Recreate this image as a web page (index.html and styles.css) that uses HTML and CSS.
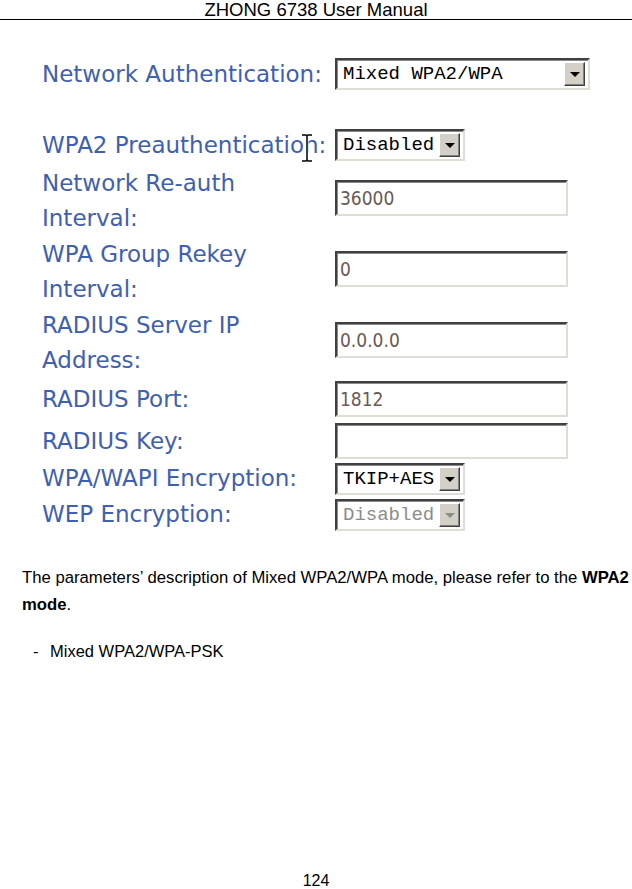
FILE: index.html
```html
<!DOCTYPE html>
<html lang="en">
<head>
    <meta charset="UTF-8" />
    <title>ZHONG 6738 User Manual</title>
    <link rel="stylesheet" href="styles.css">
</head>
<body>

<!-- Page header -->
<div class="page-header">ZHONG 6738 User Manual</div>

<!-- Screenshot of the router form -->
<div class="shot">
    <div class="row row-1">
        <div class="label">Network Authentication:</div>
        <div class="select wide"><span class="value">Mixed WPA2/WPA</span><span class="arrow"></span></div>
    </div>

    <div class="row row-2">
        <div class="label">WPA2 Preauthentication:</div>
        <div class="select"><span class="value">Disabled</span><span class="arrow"></span></div>
        <svg class="cursor" width="14" height="28" viewBox="0 0 14 28">
            <path d="M2 1h4l1 1 1-1h4M7 2v24M2 27h4l1-1 1 1h4" fill="none" stroke="#fff" stroke-width="3"/>
            <path d="M2 1h4l1 1 1-1h4M7 2v24M2 27h4l1-1 1 1h4" fill="none" stroke="#000" stroke-width="1.5"/>
        </svg>
    </div>

    <div class="row row-tall row-3">
        <div class="label">Network Re-auth<br>Interval:</div>
        <div class="input">36000</div>
    </div>

    <div class="row row-tall">
        <div class="label">WPA Group Rekey<br>Interval:</div>
        <div class="input">0</div>
    </div>

    <div class="row row-tall">
        <div class="label">RADIUS Server IP<br>Address:</div>
        <div class="input">0.0.0.0</div>
    </div>

    <div class="row row-6">
        <div class="label">RADIUS Port:</div>
        <div class="input">1812</div>
    </div>

    <div class="row row-7">
        <div class="label">RADIUS Key:</div>
        <div class="input"></div>
    </div>

    <div class="row row-8">
        <div class="label">WPA/WAPI Encryption:</div>
        <div class="select"><span class="value">TKIP+AES</span><span class="arrow"></span></div>
    </div>

    <div class="row row-9">
        <div class="label">WEP Encryption:</div>
        <div class="select disabled"><span class="value">Disabled</span><span class="arrow"></span></div>
    </div>
</div>

<!-- Body text -->
<p class="text">The parameters’ description of Mixed WPA2/WPA mode, please refer to the <strong>WPA2</strong><br><strong>mode</strong>.</p>

<p class="item"><span class="dash">-</span>Mixed WPA2/WPA-PSK</p>

<!-- Page number -->
<div class="page-number">124</div>

</body>
</html>
```

FILE: styles.css
```css
/* Page */
* {
    box-sizing: border-box;
    margin: 0;
    padding: 0;
}

body {
    width: 632px;
    height: 889px;
    position: relative;
    background: #fff;
    font-family: 'Liberation Sans', Arial, sans-serif;
    color: #000;
}

.page-header {
    height: 20px;
    border-bottom: 1px solid #000;
    text-align: center;
    font-size: 18.5px;
    line-height: 19px;
}

/* Form screenshot */
.shot {
    padding: 36px 0 0 42px;
}

.row {
    display: flex;
    align-items: center;
    position: relative;
    height: 36px;
}
.row-2 {
    margin-top: 35px;
}
.row-3 {
    margin-top: 2px;
}
.row-tall {
    height: 71px;
}
.row-tall .input {
    margin-top: -6px;
}
.row-6 {
    margin-top: 3px;
}
.row-7 {
    margin-top: 6px;
}
.row-8 {
    margin-top: 3px;
    height: 33px;
}
.row-9 {
    margin-top: 3px;
    height: 33px;
}

.label {
    width: 293px;
    font-family: 'DejaVu Sans', sans-serif;
    font-size: 23px;
    line-height: 35px;
    color: #4060b0;
    white-space: nowrap;
}

.input {
    width: 233px;
    height: 36px;
    border: 2px solid;
    border-color: #404040 #e0ddd6 #e0ddd6 #404040;
    box-shadow: inset 1px 1px 0 #8a8a8a;
    padding-left: 3px;
    font-family: 'DejaVu Sans Condensed', 'DejaVu Sans', sans-serif;
    font-size: 19px;
    line-height: 32px;
    color: #6a5a55;
}

.select {
    display: flex;
    align-items: center;
    width: 130px;
    height: 32px;
    border: 2px solid;
    border-color: #404040 #e0ddd6 #e0ddd6 #404040;
    box-shadow: inset 1px 1px 0 #8a8a8a;
    padding: 0 3px 0 6px;
    background: #fff;
}
.select.wide {
    width: 255px;
}
.select .value {
    flex: 1;
    font-family: 'Liberation Mono', 'Courier New', monospace;
    font-size: 19px;
    color: #000;
    white-space: nowrap;
    overflow: hidden;
}
.select.disabled .value {
    color: #8c8c8c;
}

/* Drop-down button */
.arrow {
    position: relative;
    width: 21px;
    height: 24px;
    background: #d4d0c8;
    border: 1px solid;
    border-color: #fff #404040 #404040 #fff;
    box-shadow: inset -1px -1px 0 #808080;
}
.arrow::after {
    content: "";
    position: absolute;
    left: 5px;
    top: 9px;
    border-left: 5px solid transparent;
    border-right: 5px solid transparent;
    border-top: 5px solid #000;
}
.select.disabled .arrow::after {
    border-top-color: #8c8c8c;
}

/* Mouse cursor over the label */
.cursor {
    position: absolute;
    left: 258px;
    top: 7px;
}

/* Document text */
.text {
    margin: 33px 0 0 22px;
    font-size: 16.7px;
    line-height: 27px;
    white-space: nowrap;
}

.item {
    margin: 23px 0 0 33px;
    font-size: 16.5px;
    line-height: 20px;
}
.dash {
    display: inline-block;
    width: 17px;
}

.page-number {
    position: absolute;
    left: 0;
    right: 0;
    bottom: 0;
    text-align: center;
    font-size: 16px;
    line-height: 16px;
}
```
